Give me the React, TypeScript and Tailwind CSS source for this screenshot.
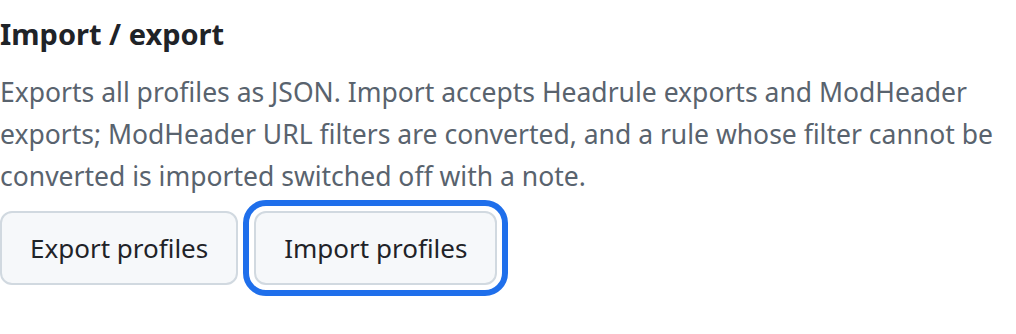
export default function App() {
  return (
    <div className="min-h-screen bg-white font-['Noto_Sans',sans-serif] pt-[14px]">
      <section className="w-[1000px]">
        <h2 className="text-[29px] leading-[40px] font-bold text-[#1f2328]">
          Import / export
        </h2>
        <p className="mt-[17px] text-[26.5px] leading-[42px] text-[#59636e]">
          Exports all profiles as JSON. Import accepts Headrule exports and
          ModHeader exports; ModHeader URL filters are converted, and a rule
          whose filter cannot be converted is imported switched off with a
          note.
        </p>
        <div className="mt-[14px] flex gap-[16px]">
          <button className="h-[74px] px-[28px] rounded-[12px] border-2 border-[#d1d9e0] bg-[#f6f8fa] text-[26px] text-[#1f2328]">
            Export profiles
          </button>
          <button className="h-[74px] px-[28px] rounded-[12px] border-2 border-[#d1d9e0] bg-[#f6f8fa] text-[26px] text-[#1f2328] outline-[6px] outline-solid outline-offset-[5px] outline-[#1f6feb]">
            Import profiles
          </button>
        </div>
      </section>
    </div>
  );
}
